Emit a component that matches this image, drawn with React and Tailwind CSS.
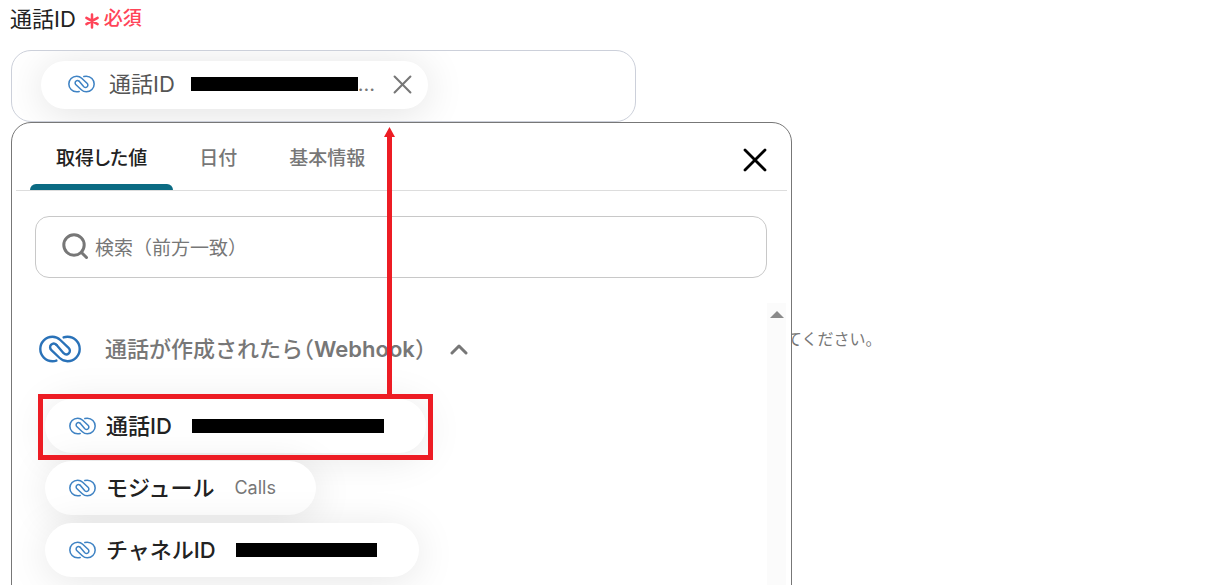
import { useState } from "react";

function LinkLogo({ className }) {
  return (
    <svg viewBox="0 0 42 28" className={className} fill="none" stroke="currentColor" strokeWidth="2.4" strokeLinecap="round" strokeLinejoin="round" aria-hidden="true">
      <path d="M17.4 25.6C16.3 26 15 26.2 13.5 26.2C6.6 26.2 1.3 20.7 1.3 14C1.3 7.3 6.6 1.8 13.5 1.8C16.5 1.8 19.2 3 21.3 5L29.6 12.8C31.3 14.4 31.3 16.9 29.8 18.3C28.3 19.7 26.1 19.6 24.6 18.2L17.4 9.8" />
      <path d="M24.6 2.4C25.7 2 27 1.8 28.5 1.8C35.4 1.8 40.7 7.3 40.7 14C40.7 20.7 35.4 26.2 28.5 26.2C25.5 26.2 22.8 25 20.7 23L12.4 15.2C10.7 13.6 10.7 11.1 12.2 9.7C13.7 8.3 15.9 8.4 17.4 9.8" />
    </svg>
  );
}

function Cross({ className, strokeWidth }) {
  return (
    <svg viewBox="0 0 24 24" className={className} fill="none" stroke="currentColor" strokeWidth={strokeWidth} strokeLinecap="round" aria-hidden="true">
      <path d="M2 2L22 22M22 2L2 22" />
    </svg>
  );
}

const TABS = ["取得した値", "日付", "基本情報"];

const VALUES = [
  { name: "通話ID", masked: "w-48", chip: "pr-[42px]" },
  { name: "モジュール", text: "Calls", chip: "pr-10" },
  { name: "チャネルID", masked: "w-[141px]", chip: "pr-[42px]" },
];

function ValueChip({ name, text, masked, chip }) {
  return (
    <button
      type="button"
      className={`flex h-[54px] items-center rounded-full bg-white pl-6 shadow-[0_4px_40px_rgba(0,0,0,0.1)] ${chip}`}
    >
      <LinkLogo className="mr-2.5 h-[18px] w-[27px] text-[#3f83c4]" />
      <span className="mr-5 text-[22px] font-medium text-[#222]">{name}</span>
      {text && <span className="text-lg text-[#777]">{text}</span>}
      {masked && <span className={`h-3.5 bg-black ${masked}`} />}
    </button>
  );
}

function Picker() {
  const [tab, setTab] = useState(TABS[0]);
  const [open, setOpen] = useState(true);
  return (
    <section className="absolute top-[122px] left-[11px] h-[640px] w-[781px] max-w-full overflow-hidden rounded-[20px] border border-[#777] bg-white">
      <div className="mx-1 flex h-[68px] items-start justify-between border-b border-[#ddd] pr-5 pl-3.5">
        <div role="tablist" className="flex h-full">
          {TABS.map((t) => (
            <button
              key={t}
              type="button"
              role="tab"
              aria-selected={tab === t}
              onClick={() => setTab(t)}
              className={`relative h-full px-[26px] pt-1.5 text-[19px] font-medium [font-feature-settings:'palt'] ${tab === t ? "text-[#222]" : "text-[#777]"}`}
            >
              {t}
              {tab === t && <span className="absolute inset-x-0 bottom-0 h-1.5 rounded-t-md bg-[#0b6b83]" />}
            </button>
          ))}
        </div>
        <button type="button" aria-label="閉じる" className="mt-[25px] text-black">
          <Cross className="size-6" strokeWidth="2.8" />
        </button>
      </div>

      <label className="mr-6 ml-[23px] mt-[25px] flex h-[62px] items-center rounded-[14px] border border-[#c8c8c8] pl-[26px]">
        <svg viewBox="0 0 28 28" className="mr-[5px] size-7 text-[#777]" fill="none" stroke="currentColor" strokeWidth="3" strokeLinecap="round" aria-hidden="true">
          <circle cx="12" cy="12" r="10.2" />
          <path d="M19.5 19.5L24.5 24.5" />
        </svg>
        <input
          type="search"
          aria-label="検索"
          placeholder="検索（前方一致）"
          className="min-w-0 flex-1 bg-transparent pt-1 text-[19px] outline-none placeholder:text-[#777]"
        />
      </label>

      <div className="mt-[25px] mr-[5px] flex">
        <div className="flex min-w-0 flex-1 flex-col items-start pl-[27px]">
          <button type="button" aria-expanded={open} onClick={() => setOpen(!open)} className="mt-[26px] flex h-10 items-center">
            <LinkLogo className="mr-6 h-7 w-[42px] text-[#2a72b8]" />
            <span className="mr-6 text-[22px] font-medium text-[#777] [font-feature-settings:'halt']">
              通話が作成されたら（<span className="font-semibold">Webhook</span>）
            </span>
            <svg viewBox="0 0 18 12" className="h-3 w-[18px] text-[#777]" fill="none" stroke="currentColor" strokeWidth="3" strokeLinecap="round" strokeLinejoin="round" aria-hidden="true">
              <path d="M2 10L9 3L16 10" />
            </svg>
          </button>
          {open && (
            <div className="mt-[30px] flex flex-col items-start gap-2 pl-1.5">
              {VALUES.map((v) => (
                <ValueChip key={v.name} {...v} />
              ))}
            </div>
          )}
        </div>
        <div className="flex h-[400px] w-[19px] justify-center bg-[#fbfbfb] pt-2" aria-hidden="true">
          <svg viewBox="0 0 14 7" className="h-[7px] w-3.5 text-[#8a8a8a]" fill="currentColor">
            <path d="M7 0L14 7H0Z" />
          </svg>
        </div>
      </div>
    </section>
  );
}

export default function App() {
  return (
    <main className="relative h-screen overflow-hidden bg-white font-['Inter','Noto_Sans_CJK_JP',sans-serif]">
      <div className="flex h-[38px] items-center pl-2.5">
        <h1 className="text-[22px] text-[#222]">通話ID</h1>
        <svg viewBox="0 0 16 16" className="mt-1 mr-1 ml-2 size-4 text-[#ff4458]" fill="none" stroke="currentColor" strokeWidth="2.5" strokeLinecap="round" aria-hidden="true">
          <path d="M8 1.5V14.5M2.4 4.8L13.6 11.2M13.6 4.8L2.4 11.2" />
        </svg>
        <span className="text-[19px] font-medium text-[#ff4458]">必須</span>
      </div>
      <div className="mt-3 ml-[11px] flex h-[72px] w-[625px] max-w-full items-center overflow-hidden rounded-[20px] border border-[#ccd0da] pb-0.5 pl-[29px]">
        <div className="flex h-12 items-center rounded-full bg-white pr-4 pb-0.5 pl-[27px] shadow-[0_4px_40px_rgba(0,0,0,0.12)]">
          <LinkLogo className="mr-3.5 h-[18px] w-[27px] text-[#3f83c4]" />
          <span className="mr-4 text-[22px] text-[#555]">通話ID</span>
          <span className="h-3.5 w-[167px] bg-black" />
          <span className="mr-[18px] text-xl text-[#777]">…</span>
          <button type="button" aria-label="削除" className="text-[#777]">
            <Cross className="size-[19px]" strokeWidth="2.6" />
          </button>
        </div>
      </div>
      <p className="mt-[205px] ml-[786px] text-base text-[#777]">てください。</p>

      <Picker />

      <div className="pointer-events-none absolute top-[394px] left-[38px] h-[66px] w-[395px] border-[5px] border-[#ed1c24]" />
      <svg viewBox="0 0 12 268" className="pointer-events-none absolute top-[127px] left-[384px] h-[268px] w-3" fill="#ed1c24" aria-hidden="true">
        <path d="M5.5 0L11 10H8V268H3V10H0Z" />
      </svg>
    </main>
  );
}
